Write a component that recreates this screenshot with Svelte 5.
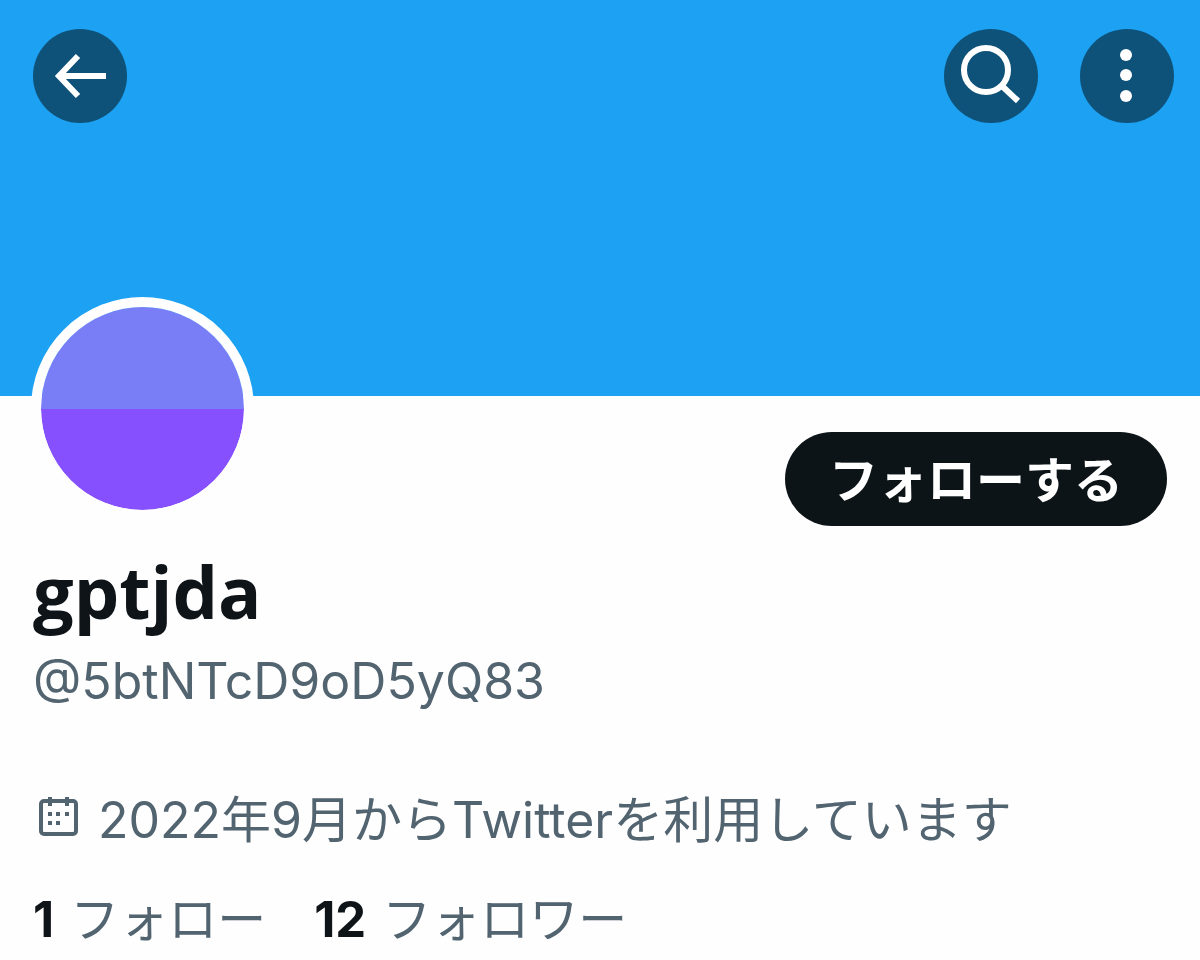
<script>
    const profile = {
        name: "gptjda",
        handle: "@5btNTcD9oD5yQ83",
        joined: "2022年9月からTwitterを利用しています",
        following: 1,
        followers: 12,
    };
    const days = [
        [10, 15],
        [18, 15],
        [27, 15],
        [10, 24],
        [18, 24],
    ];
</script>

<main>
    <header>
        <button class="round" aria-label="戻る">
            <svg viewBox="0 0 94 94">
                <path d="M73 47H26M45 27L26 47L45 67" />
            </svg>
        </button>
        <div class="actions">
            <button class="round" aria-label="検索">
                <svg viewBox="0 0 94 94">
                    <circle cx="42" cy="41" r="22" />
                    <path d="M58 57L74 72" />
                </svg>
            </button>
            <button class="round" aria-label="その他">
                <svg class="more" viewBox="0 0 94 94">
                    <circle cx="46" cy="26" r="6" />
                    <circle cx="46" cy="46" r="6" />
                    <circle cx="46" cy="67" r="6" />
                </svg>
            </button>
        </div>
    </header>

    <section>
        <div class="top">
            <div class="avatar"></div>
            <button class="follow">フォローする</button>
        </div>
        <h1>{profile.name}</h1>
        <p class="handle">{profile.handle}</p>
        <p class="joined">
            <svg viewBox="0 0 40 40">
                <rect class="frame" x="3" y="4" width="35" height="33" rx="3" />
                <path d="M12 0V9M29 0V9" />
                {#each days as [x, y]}
                    <rect class="day" {x} {y} width="4" height="4" />
                {/each}
            </svg>
            <span>{profile.joined}</span>
        </p>
        <nav>
            <a href="#following"><b>{profile.following}</b>フォロー</a>
            <a href="#followers"><b>{profile.followers}</b>フォロワー</a>
        </nav>
    </section>
</main>

<style>
    :global(body) {
        margin: 0;
        background: #fefefe;
    }

    main {
        font-family: Inter, "Noto Sans CJK JP", sans-serif;
        color: #0f1419;
    }

    header {
        display: flex;
        justify-content: space-between;
        align-items: flex-start;
        box-sizing: border-box;
        height: 396px;
        padding: 29px 26px 0 33px;
        background: #1da1f2;
    }

    .actions {
        display: flex;
        gap: 42px;
    }

    button {
        border: 0;
        padding: 0;
        font-family: inherit;
        cursor: pointer;
    }

    .round {
        width: 94px;
        height: 94px;
        border-radius: 50%;
        background: #0e5179;
    }

    svg {
        display: block;
        fill: none;
        stroke: #fff;
        stroke-width: 6;
    }

    .more circle {
        fill: #fff;
        stroke: none;
    }

    section {
        padding: 0 33px;
    }

    .top {
        display: flex;
        justify-content: space-between;
        align-items: flex-start;
    }

    .avatar {
        width: 203px;
        height: 203px;
        margin: -99px 0 0 -2px;
        border: 10px solid #fefefe;
        border-radius: 50%;
        background: linear-gradient(#797ef6 50%, #8650ff 50%) padding-box;
    }

    .follow {
        width: 382px;
        height: 94px;
        margin-top: 36px;
        padding-bottom: 6px;
        border-radius: 47px;
        background: #0d1418;
        color: #fff;
        font-size: 49px;
        font-weight: 700;
    }

    h1 {
        margin: 23px 0 0;
        font-family: "Open Sans", "Noto Sans CJK JP", sans-serif;
        font-size: 72px;
        line-height: 84px;
        font-weight: 700;
    }

    p {
        margin: 0;
        color: #536471;
        font-size: 50px;
        line-height: 72px;
    }

    .handle {
        margin-top: 12px;
    }

    .joined {
        display: flex;
        align-items: flex-start;
        gap: 20px;
        margin-top: 67px;
        padding-left: 5px;
    }

    .joined svg {
        width: 40px;
        height: 40px;
        margin-top: 13px;
        stroke: #536471;
        stroke-width: 4;
    }

    .joined .day {
        fill: #536471;
        stroke: none;
    }

    nav {
        display: flex;
        gap: 48px;
        margin-top: 28px;
    }

    a {
        display: flex;
        gap: 16px;
        color: #536471;
        font-size: 49px;
        line-height: 72px;
        text-decoration: none;
    }

    b {
        color: #0f1419;
    }
</style>
